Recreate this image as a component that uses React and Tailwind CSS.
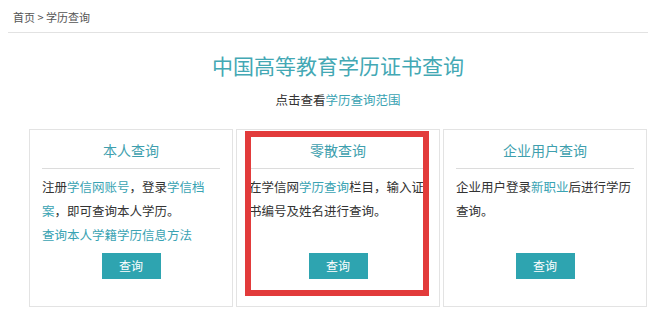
import React from "react";

const font = { fontFamily: '"Noto Sans CJK SC", "Noto Sans", sans-serif' };

const cards = [
  {
    title: "本人查询",
    lines: [
      [["注册", false], ["学信网账号", true], ["，登录", false], ["学信档", true]],
      [["案", true], ["，即可查询本人学历。", false]],
      [["查询本人学籍学历信息方法", true]],
    ],
  },
  {
    title: "零散查询",
    lines: [
      [["在学信网", false], ["学历查询", true], ["栏目，输入证", false]],
      [["书编号及姓名进行查询。", false]],
    ],
    marked: true,
  },
  {
    title: "企业用户查询",
    lines: [
      [["企业用户登录", false], ["新职业", true], ["后进行学历", false]],
      [["查询。", false]],
    ],
  },
];

const Card = ({ card }) => (
  <div className="relative border border-[#e3e3e3] bg-white px-[12px] pt-[10px] pb-[27px]">
    <h3 className="border-b border-[#dcdcdc] pb-[8px] text-center text-[14px] leading-[20px] text-[#3f9fae]">{card.title}</h3>
    <div className="h-[84px] pt-[6px] text-[12.5px] leading-[24px] text-[#333]">
      {card.lines.map((line, i) => (
        <p key={i} className="whitespace-nowrap">
          {line.map(([text, link], j) => (
            <span key={j} className={link ? "text-[#3aa3b3]" : ""}>{text}</span>
          ))}
        </p>
      ))}
    </div>
    <div className="flex justify-center">
      <button className="h-[26px] w-[59px] bg-[#2ea4b0] text-[12px] text-white">查询</button>
    </div>
    {card.marked && (
      <div className="absolute left-[8px] right-[10px] top-[1px] bottom-[10px] border-[6px] border-[#e23b3b]" />
    )}
  </div>
);

export default function App() {
  return (
    <div className="min-h-[317px] w-[655px] bg-white" style={font}>
      <div className="px-[13px] pt-[9px] pb-[7px] text-[11px] leading-[16px] text-[#555]">首页 &gt; 学历查询</div>
      <div className="mx-[8px] w-[640px] border-t border-[#e2e2e2]" />
      <div className="ml-[29px] w-[618px]">
        <h1 className="pt-[17px] text-center text-[21px] leading-[30px] text-[#43a8b4]">中国高等教育学历证书查询</h1>
        <p className="pt-[12px] text-center text-[12.5px] leading-[16px] text-[#333]">
          点击查看<span className="text-[#3aa3b3]">学历查询范围</span>
        </p>
        <div className="mt-[21px] grid grid-cols-3 gap-[3px]">
          {cards.map((c) => <Card key={c.title} card={c} />)}
        </div>
      </div>
    </div>
  );
}
